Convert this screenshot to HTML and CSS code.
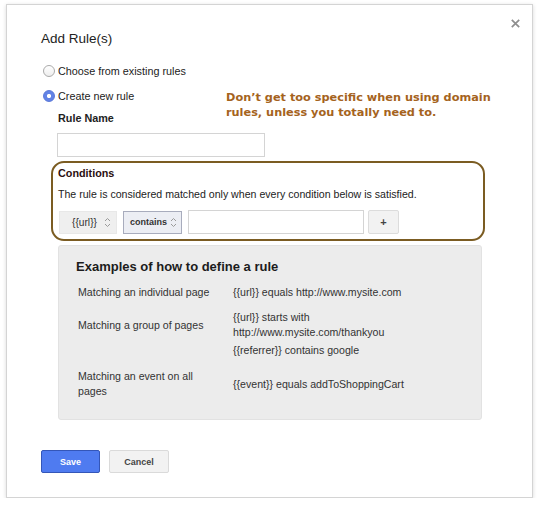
FILE: index.html
```html
<!DOCTYPE html>
<html lang="en">
<head>
  <meta charset="UTF-8">
  <title>Add Rule(s)</title>
  <link rel="stylesheet" href="styles.css">
</head>
<body>
  <div class="dialog">
    <svg class="close" width="9" height="9" viewBox="0 0 9 9">
      <path d="M0.8 0.8 L8.2 8.2 M8.2 0.8 L0.8 8.2" stroke="#8e8e8e" stroke-width="1.7" fill="none"/>
    </svg>
    <h2 class="title">Add Rule(s)</h2>

    <label class="radio-row"><span class="radio"></span>Choose from existing rules</label>
    <label class="radio-row"><span class="radio checked"></span>Create new rule</label>

    <div class="note">Don’t get too specific when using domain<br>rules, unless you totally need to.</div>

    <div class="field">
      <div class="field-label">Rule Name</div>
      <input class="text-input name-input" type="text">
    </div>

    <div class="conditions">
      <div class="field-label">Conditions</div>
      <p class="cond-help">The rule is considered matched only when every condition below is satisfied.</p>
      <div class="cond-row">
        <div class="select var-select">{{url}}
          <svg class="arrows" width="7" height="11" viewBox="0 0 7 11"><path d="M1 4 L3.5 1.5 L6 4 M1 7 L3.5 9.5 L6 7" stroke="#9a9a9a" stroke-width="1" fill="none"/></svg>
        </div>
        <div class="select op-select">contains
          <svg class="arrows" width="7" height="11" viewBox="0 0 7 11"><path d="M1 4 L3.5 1.5 L6 4 M1 7 L3.5 9.5 L6 7" stroke="#9a9a9a" stroke-width="1" fill="none"/></svg>
        </div>
        <input class="text-input value-input" type="text">
        <button class="plus-button">+</button>
      </div>
    </div>

    <div class="examples">
      <h3 class="examples-title">Examples of how to define a rule</h3>
      <table class="examples-table">
        <tr class="ex-single">
          <td class="ex-name">Matching an individual page</td>
          <td class="ex-rule">{{url}} equals http://www.mysite.com</td>
        </tr>
        <tr class="ex-group">
          <td class="ex-name">Matching a group of pages</td>
          <td class="ex-rule">{{url}} starts with<br>http://www.mysite.com/thankyou<div class="ex-and">{{referrer}} contains google</div></td>
        </tr>
        <tr class="ex-event">
          <td class="ex-name">Matching an event on all<br>pages</td>
          <td class="ex-rule">{{event}} equals addToShoppingCart</td>
        </tr>
      </table>
    </div>

    <div class="buttons">
      <button class="btn save">Save</button>
      <button class="btn cancel">Cancel</button>
    </div>
  </div>
</body>
</html>
```

FILE: styles.css
```css
body {
  margin: 0;
  background: #fff;
  font-family: "Liberation Sans", Arial, sans-serif;
  color: #222;
}
.dialog {
  position: relative;
  box-sizing: border-box;
  width: 527px;
  height: 494px;
  margin: 4px 0 0 6px;
  padding: 26px 0 0 34px;
  border: 1px solid #d4d4d4;
  box-shadow: 0 1px 4px rgba(0, 0, 0, 0.15);
  background: #fff;
}
.close {
  position: absolute;
  top: 14px;
  right: 12px;
}
.title {
  margin: 0 0 16px;
  font-size: 13.5px;
  line-height: 16px;
  font-weight: normal;
  color: #222;
}
.radio-row {
  display: flex;
  align-items: center;
  gap: 3px;
  height: 16px;
  margin-bottom: 9px;
  font-size: 10.8px;
  color: #222;
}
.radio {
  box-sizing: border-box;
  width: 12px;
  height: 12px;
  margin-left: 2px;
  border-radius: 50%;
  border: 1px solid #aaa;
  background: linear-gradient(#fff, #eee);
}
.radio.checked {
  border-color: #5a78d8;
  background: radial-gradient(circle, #fff 0 1.8px, #6283e6 2.4px);
}
.note {
  position: absolute;
  left: 219px;
  top: 85px;
  font-family: "DejaVu Sans", sans-serif;
  font-size: 11.3px;
  line-height: 15px;
  font-weight: bold;
  color: #a5631d;
}
.field {
  margin: -3px 0 0 17px;
}
.field-label {
  font-size: 10.8px;
  font-weight: bold;
  line-height: 16px;
  color: #222;
}
.text-input {
  box-sizing: border-box;
  height: 24px;
  border: 1px solid #d4d4d4;
  background: #fff;
  margin: 0;
}
.name-input {
  display: block;
  width: 208px;
  margin: 7px 0 0 -1px;
}
.conditions {
  box-sizing: border-box;
  width: 434px;
  margin: 4px 0 0 10px;
  padding: 2px 0 5px 5px;
  border: 2px solid #7b5c22;
  border-radius: 13px;
}
.conditions .field-label {
  color: #2a0e0e;
}
.cond-help {
  margin: 6px 0 9px;
  font-size: 10.6px;
  line-height: 14px;
  color: #222;
}
.cond-row {
  display: flex;
  align-items: center;
  gap: 6px;
  margin-left: 1px;
}
.select {
  box-sizing: border-box;
  height: 23px;
  display: flex;
  align-items: center;
  justify-content: space-between;
  font-size: 9px;
  font-weight: bold;
  color: #333;
}
.var-select {
  width: 58px;
  padding: 0 5px 0 12px;
  background: #efefef;
  border: 1px solid #e8e8e8;
  font-size: 10.2px;
  font-weight: normal;
}
.op-select {
  width: 59px;
  padding: 0 4px 0 6px;
  background: #eceef4;
  border: 1px solid #a8acbd;
}
.value-input {
  width: 176px;
}
.plus-button {
  box-sizing: border-box;
  width: 31px;
  height: 24px;
  padding: 0;
  margin-left: -2px;
  background: #f2f2f2;
  border: 1px solid #dcdcdc;
  border-radius: 2px;
  font-family: "Liberation Sans", Arial, sans-serif;
  font-size: 11px;
  font-weight: bold;
  color: #444;
}
.examples {
  box-sizing: border-box;
  width: 424px;
  height: 175px;
  margin: 4px 0 0 17px;
  padding: 13px 0 0 17px;
  background: #ececec;
  border: 1px solid #e2e2e2;
  border-radius: 3px;
}
.examples-title {
  margin: 0 0 10px;
  font-size: 13px;
  line-height: 16px;
  font-weight: bold;
  color: #1c1c1c;
}
.examples-table {
  border-collapse: collapse;
  font-size: 10.6px;
  line-height: 15px;
  color: #333;
}
.examples-table td {
  padding: 0 0 0 2px;
  vertical-align: top;
}
.ex-name {
  width: 153px;
}
.ex-single td {
  padding-bottom: 10px;
}
.ex-group .ex-name {
  padding-top: 8px;
}
.ex-group .ex-rule {
  padding-bottom: 11px;
}
.ex-and {
  margin-top: 3px;
}
.ex-event .ex-rule {
  padding-top: 8px;
}
.buttons {
  display: flex;
  gap: 9px;
  margin-top: 30px;
}
.btn {
  box-sizing: border-box;
  width: 59px;
  height: 23px;
  padding: 0;
  border-radius: 2px;
  font-family: "Liberation Sans", Arial, sans-serif;
  font-size: 9px;
  font-weight: bold;
}
.save {
  background: #4f7bf0;
  border: 1px solid #3456b8;
  color: #fff;
}
.cancel {
  width: 60px;
  background: #f2f2f2;
  border: 1px solid #dadada;
  color: #444;
}
```
